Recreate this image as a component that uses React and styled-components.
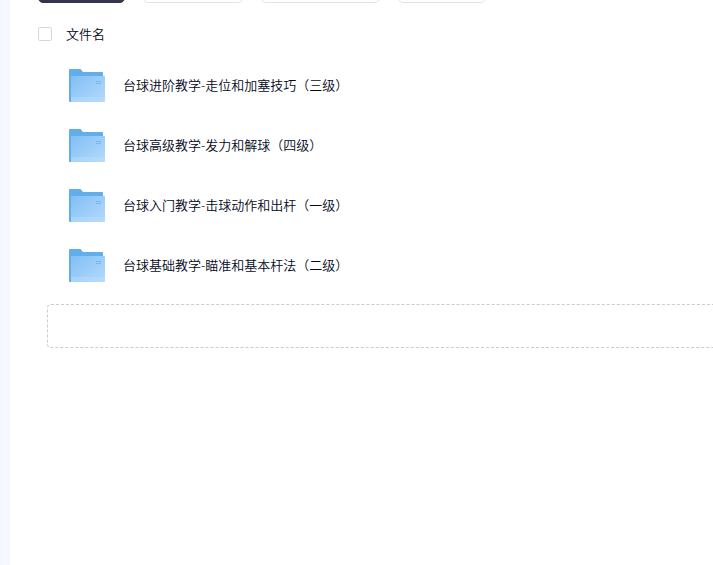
import React from 'react'
import styled, { createGlobalStyle } from 'styled-components'

const folders = [
    '台球进阶教学-走位和加塞技巧（三级）',
    '台球高级教学-发力和解球（四级）',
    '台球入门教学-击球动作和出杆（一级）',
    '台球基础教学-瞄准和基本杆法（二级）',
]

function FolderIcon() {
    return (
        <FolderSvg viewBox="0 0 38 34" aria-hidden="true">
            <defs>
                <linearGradient id="front" x1="0" y1="0" x2="1" y2="1">
                    <stop offset="0" stopColor="#82bff4" />
                    <stop offset="1" stopColor="#b3dafd" />
                </linearGradient>
            </defs>
            <path d="M1 2a1 1 0 0 1 1-1h10.500l2.500 3h19a1 1 0 0 1 1 1v12H3v17H2a1 1 0 0 1-1-1z" fill="#62aeeb" />
            <path d="M3 8h33a1 1 0 0 1 1 1v24a1 1 0 0 1-1 1H3z" fill="url(#front)" />
            <path d="M3 29h34v4a1 1 0 0 1-1 1H3z" fill="#b9defe" opacity="0.45" />
            <path d="M28 13.500h5M28 15.500h5" stroke="#7ab7ef" />
        </FolderSvg>
    )
}

function App() {
    return (
        <>
        <GlobalStyle />
        <Page>
        <Panel>
        <Toolbar>
            <ToolButton $width={87} $primary aria-label="上传" />
            <ToolButton $width={100} aria-label="新建文件夹" />
            <ToolButton $width={119} aria-label="下载" />
            <ToolButton $width={88} aria-label="更多" />
        </Toolbar>
        <Header>
            <Checkbox type="checkbox" />
            <span>文件名</span>
        </Header>
        <List>
            {folders.map((name) => (
                <Row key={name}>
                    <FolderIcon />
                    <FolderLink href="#">{name}</FolderLink>
                </Row>
            ))}
        </List>
        <DropZone />
        </Panel>
        </Page>
        </>
    )
}

export default App

const GlobalStyle = createGlobalStyle`
*{
    box-sizing:border-box;
}
body{
    margin:0;
    background:#fff;
    font-family:"Noto Sans","Noto Sans CJK SC",sans-serif;
    font-size:13px;
    font-weight:350;
    color:#03081a;
}
`
const Page = styled.div`
min-height:100vh;
padding-left:10px;
background:#f5f9ff;
display:flex;
`
const Panel = styled.main`
flex:1;
min-width:0;
padding-left:28px;
background:#fff;
overflow:hidden;
`
/* scrolled up: only the bottom edge of the buttons shows */
const Toolbar = styled.div`
height:3px;
display:flex;
align-items:flex-end;
gap:18px;
overflow:hidden;
`
const ToolButton = styled.button`
flex:none;
width:${props => props.$width}px;
height:36px;
padding:0;
border:1px solid ${props => props.$primary ? '#36364d' : '#e3e3e5'};
border-radius:5px;
background:${props => props.$primary ? '#36364d' : '#fff'};
cursor:pointer;
`
const Header = styled.label`
display:flex;
align-items:center;
gap:14px;
padding:19px 0 9px;
line-height:24px;
`
const Checkbox = styled.input`
appearance:none;
width:14px;
height:14px;
margin:0;
border:1px solid #d8d8d8;
border-radius:2px;
background:#fff;
&:checked{
    background:#36364d;
}
`
const List = styled.ul`
margin:0;
padding:0 0 0 30px;
list-style:none;
`
const Row = styled.li`
height:60px;
display:flex;
align-items:center;
gap:17px;
`
const FolderSvg = styled.svg`
flex:none;
width:38px;
height:34px;
`
const FolderLink = styled.a`
color:inherit;
text-decoration:none;
white-space:nowrap;
line-height:20px;
`
const DropZone = styled.div`
height:44px;
margin:9px -20px 0 9px;
border:1px dashed #ccc;
border-radius:4px;
`
